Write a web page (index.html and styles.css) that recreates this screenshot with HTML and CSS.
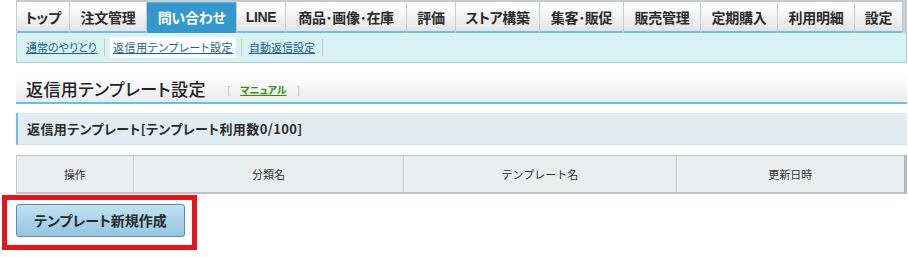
FILE: index.html
```html
<!DOCTYPE html>
<html lang="ja">
<head>
<meta charset="utf-8">
<title>返信用テンプレート設定</title>
<link rel="stylesheet" href="styles.css">
</head>
<body>
<div class="page">
  <nav class="tabs">
    <a class="tab t-top">トップ</a>
    <a class="tab t-order">注文管理</a>
    <a class="tab t-inq active">問い合わせ</a>
    <a class="tab t-line">LINE</a>
    <a class="tab t-item">商品･画像･在庫</a>
    <a class="tab t-review">評価</a>
    <a class="tab t-store">ストア構築</a>
    <a class="tab t-promo">集客･販促</a>
    <a class="tab t-sales">販売管理</a>
    <a class="tab t-sub">定期購入</a>
    <a class="tab t-bill">利用明細</a>
    <a class="tab t-set">設定</a>
  </nav>
  <div class="subnav">
    <a class="sublink">通常のやりとり</a>
    <span class="sep"></span>
    <a class="sublink current">返信用テンプレート設定</a>
    <span class="sep"></span>
    <a class="sublink">自動返信設定</a>
    <span class="sep"></span>
  </div>

  <div class="title">
    <h1 class="title-text">返信用テンプレート設定</h1>
    <span class="manual"><span class="br">[</span><a class="manual-link">マニュアル</a><span class="br">]</span></span>
  </div>

  <div class="section">返信用テンプレート[テンプレート利用数0/100]</div>

  <table class="list">
    <thead>
      <tr>
        <th class="c-op">操作</th>
        <th class="c-cat">分類名</th>
        <th class="c-name">テンプレート名</th>
        <th class="c-date">更新日時</th>
      </tr>
    </thead>
  </table>

  <div class="actions">
    <button class="btn">テンプレート新規作成</button>
    <div class="highlight"></div>
  </div>
</div>
</body>
</html>
```

FILE: styles.css
```css
* { box-sizing: border-box; }
html, body { margin: 0; padding: 0; background: #fff; }
body {
  font-family: "Noto Sans CJK JP", "Noto Sans", sans-serif;
  color: #333;
  min-height: 257px;
}
.page {
  width: 908px;
  min-height: 257px;
  padding-left: 16px;
  padding-right: 1px;
}

/* tabs */
.tabs {
  display: flex;
  gap: 1px;
  background: #c6cbcb;
  padding: 2px 4px 0 1px;
  height: 33px;
  align-items: stretch;
}
.tab {
  display: flex;
  align-items: center;
  justify-content: center;
  height: 31px;
  font-size: 14px;
  font-weight: 700;
  color: #2a2a2a;
  background: linear-gradient(#ffffff 0%, #f4f4f4 45%, #e3e3e3 100%);
  border-bottom: 2px solid #6dbdee;
  white-space: nowrap;
  letter-spacing: -0.3px;
  font-feature-settings: "palt";
}
.tab.active {
  background: #3598cc;
  color: #fff;
  border-bottom-color: #3598cc;
  border-top: 1px solid #5fb3e0;
}
.t-top { width: 52px; }
.t-order { width: 76px; }
.t-inq { width: 89px; }
.t-line { width: 48px; font-family: "Liberation Sans", sans-serif; }
.t-item { width: 120px; }
.t-review { width: 48px; }
.t-store { width: 83px; }
.t-promo { width: 83px; }
.t-sales { width: 76px; }
.t-sub { width: 76px; }
.t-bill { width: 76px; }
.t-set { width: 47px; }

/* sub nav */
.subnav {
  display: flex;
  align-items: center;
  height: 30px;
  background: #d8f2f4;
  border-left: 1px solid #a2d1d6;
  border-right: 1px solid #a2d1d6;
  border-bottom: 1px solid #a2d1d6;
  padding-left: 7px;
  gap: 5px;
}
.sublink {
  font-size: 11px;
  color: #1d5f8f;
  text-decoration: underline;
  padding: 2px 2px;
  line-height: 17px;
  font-feature-settings: "palt";
}
.sublink.current {
  background: #fff;
  padding: 2px 3px;
  letter-spacing: 0.6px;
}
.sep {
  width: 1px;
  height: 17px;
  background: #bcc6c7;
}

/* title */
.title {
  margin-top: 7px;
  height: 34px;
  display: flex;
  align-items: center;
  padding: 4px 0 0 10px;
  background: linear-gradient(#ffffff 0%, #fafafa 35%, #ebebeb 100%);
  border-bottom: 2px solid #67bcf0;
}
.title-text {
  margin: 0;
  font-size: 17px;
  font-weight: 500;
  color: #222;
  letter-spacing: 0.4px;
  font-feature-settings: "palt";
}
.manual {
  margin-left: 21px;
  font-size: 10px;
  display: flex;
  align-items: center;
  gap: 10px;
  padding-top: 3px;
}
.br { color: #bbbbbb; }
.manual-link {
  color: #2f8f10;
  font-weight: 700;
  text-decoration: underline;
  font-feature-settings: "palt";
}

/* section */
.section {
  margin-top: 9px;
  height: 32px;
  display: flex;
  align-items: center;
  padding-left: 9px;
  background: #e1ecf2;
  border-left: 2px solid #6abef0;
  border-bottom: 1px solid #c9e4ed;
  font-size: 13px;
  font-weight: 700;
  color: #2b2b2b;
  letter-spacing: 0.4px;
  font-feature-settings: "palt";
}

/* table */
.list {
  margin-top: 10px;
  width: 891px;
  border-collapse: collapse;
  border-top: 1px solid #c2c7c7;
  border-left: 1px solid #c2c7c7;
  border-right: 3px solid #b4b9b9;
  border-bottom: 2px solid #bec3c3;
}
.list th {
  height: 37px;
  background: #e9eded;
  font-size: 11px;
  font-weight: 400;
  color: #333;
  text-align: center;
  border-right: 1px solid #c2c7c7;
  box-shadow: inset 1px 0 0 #ffffff;
  padding: 0;
}
.c-op { width: 117px; }
.c-cat { width: 271px; }
.c-name { width: 273px; }
.c-date { width: 230px; }

/* actions */
.actions {
  position: relative;
  margin-top: 10px;
}
.btn {
  display: block;
  width: 169px;
  height: 33px;
  font-family: "Noto Sans CJK JP", sans-serif;
  font-size: 14px;
  font-weight: 700;
  color: #2a2a2a;
  background: linear-gradient(#c0e2f3 0%, #a9d4ea 50%, #93c5de 100%);
  border: 1px solid #5b8db1;
  border-radius: 3px;
  padding: 0;
  font-feature-settings: "palt";
}
.highlight {
  position: absolute;
  left: -14px;
  top: -9px;
  width: 195px;
  height: 55px;
  border: 5px solid #e3161d;
  pointer-events: none;
}
```
